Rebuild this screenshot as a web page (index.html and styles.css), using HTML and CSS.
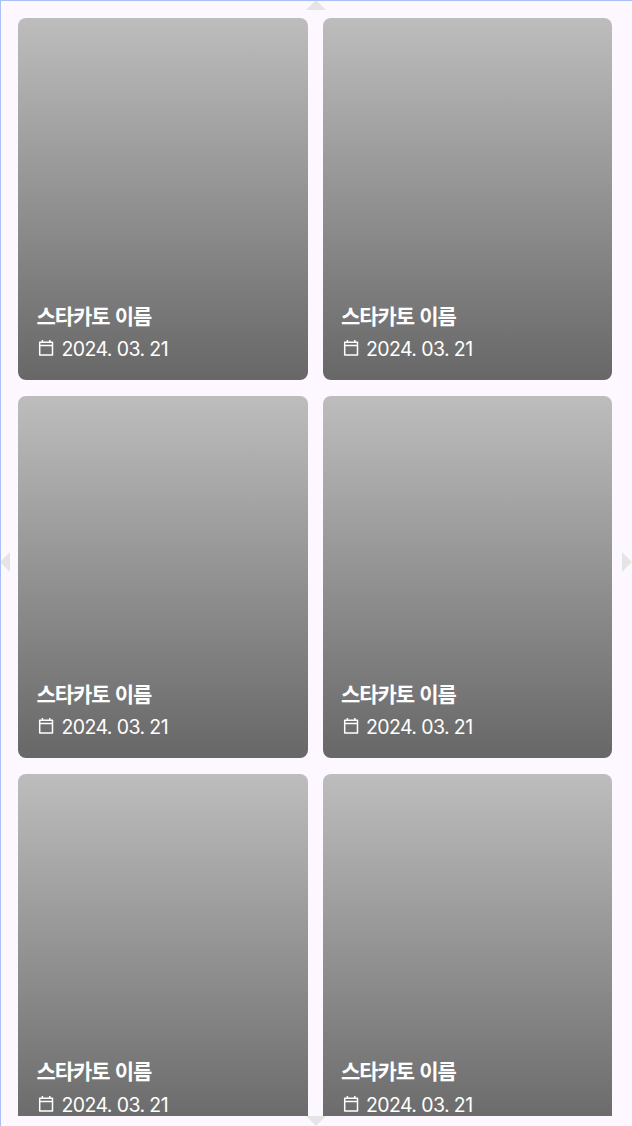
FILE: index.html
```
<!DOCTYPE html>
<html lang="ko">
<head>
  <meta charset="UTF-8" />
  <meta name="viewport" content="width=device-width, initial-scale=1" />
  <title>스타카토</title>
  <link rel="stylesheet" href="styles.css">
</head>
<body>
  <svg width="0" height="0" class="icon-defs">
    <symbol id="calendar" viewBox="0 0 16 18">
      <path d="M1.7 3.2h12.8v12.8H1.7zM1.7 6.6h12.8M4.4 1v2.2M11.8 1v2.2" fill="none" stroke="currentColor" stroke-width="1.5" stroke-linejoin="round" />
    </symbol>
  </svg>
  <div class="screen">
    <div class="card-grid">
      <div class="card">
        <div class="card-title">스타카토 이름</div>
        <div class="card-date"><svg class="card-icon"><use href="#calendar" /></svg><span>2024. 03. 21</span></div>
      </div>
      <div class="card">
        <div class="card-title">스타카토 이름</div>
        <div class="card-date"><svg class="card-icon"><use href="#calendar" /></svg><span>2024. 03. 21</span></div>
      </div>
      <div class="card">
        <div class="card-title">스타카토 이름</div>
        <div class="card-date"><svg class="card-icon"><use href="#calendar" /></svg><span>2024. 03. 21</span></div>
      </div>
      <div class="card">
        <div class="card-title">스타카토 이름</div>
        <div class="card-date"><svg class="card-icon"><use href="#calendar" /></svg><span>2024. 03. 21</span></div>
      </div>
      <div class="card">
        <div class="card-title">스타카토 이름</div>
        <div class="card-date"><svg class="card-icon"><use href="#calendar" /></svg><span>2024. 03. 21</span></div>
      </div>
      <div class="card">
        <div class="card-title">스타카토 이름</div>
        <div class="card-date"><svg class="card-icon"><use href="#calendar" /></svg><span>2024. 03. 21</span></div>
      </div>
    </div>
    <div class="arrow arrow-top"></div>
    <div class="arrow arrow-left"></div>
    <div class="arrow arrow-right"></div>
    <div class="arrow arrow-bottom"></div>
  </div>
</body>
</html>
```
FILE: styles.css
```
* {
  box-sizing: border-box;
  margin: 0;
  padding: 0;
}
body {
  background: #fdf8ff;
  color: #fff;
  font-family: 'Inter', 'Noto Sans CJK KR', sans-serif;
  overflow: hidden;
}
.icon-defs {
  display: none;
}
.screen {
  position: relative;
  width: 100%;
  height: 1126px;
  padding: 17px 20px 0 17px;
  border-top: 1px solid #a9bff8;
  border-left: 1px solid #a9bff8;
  overflow: hidden;
}
.card-grid {
  display: grid;
  grid-template-columns: 1fr 1fr;
  grid-auto-rows: 362px;
  gap: 15.8px 15px;
  height: 1097.5px;
  overflow: hidden;
}
.card {
  display: flex;
  flex-direction: column;
  justify-content: flex-end;
  padding: 0 18.5px 20px;
  border-radius: 8px;
  background: linear-gradient(#bdbdbd, #676767);
}
.card-title {
  font-size: 21px;
  font-weight: 700;
  line-height: 30px;
  letter-spacing: -1.1px;
  word-spacing: 1.6px;
  white-space: nowrap;
}
.card-date {
  display: flex;
  align-items: center;
  gap: 7.5px;
  margin-top: 6.3px;
  font-size: 19.5px;
  line-height: 22px;
  letter-spacing: -0.6px;
  white-space: nowrap;
}
.card-icon {
  width: 16px;
  height: 18px;
  margin: -2px 0 0 1.5px;
}
.arrow {
  position: absolute;
  background: #e5e5e5;
}
.arrow-top,
.arrow-bottom {
  left: 305px;
  width: 20px;
  height: 10px;
}
.arrow-left,
.arrow-right {
  top: 551px;
  width: 10px;
  height: 20px;
}
.arrow-top {
  top: -1px;
  clip-path: polygon(50% 0, 100% 100%, 0 100%);
}
.arrow-bottom {
  bottom: 0;
  clip-path: polygon(0 0, 100% 0, 50% 100%);
}
.arrow-left {
  left: -1px;
  clip-path: polygon(0 50%, 100% 0, 100% 100%);
}
.arrow-right {
  right: 0;
  clip-path: polygon(0 0, 100% 50%, 0 100%);
}
```
